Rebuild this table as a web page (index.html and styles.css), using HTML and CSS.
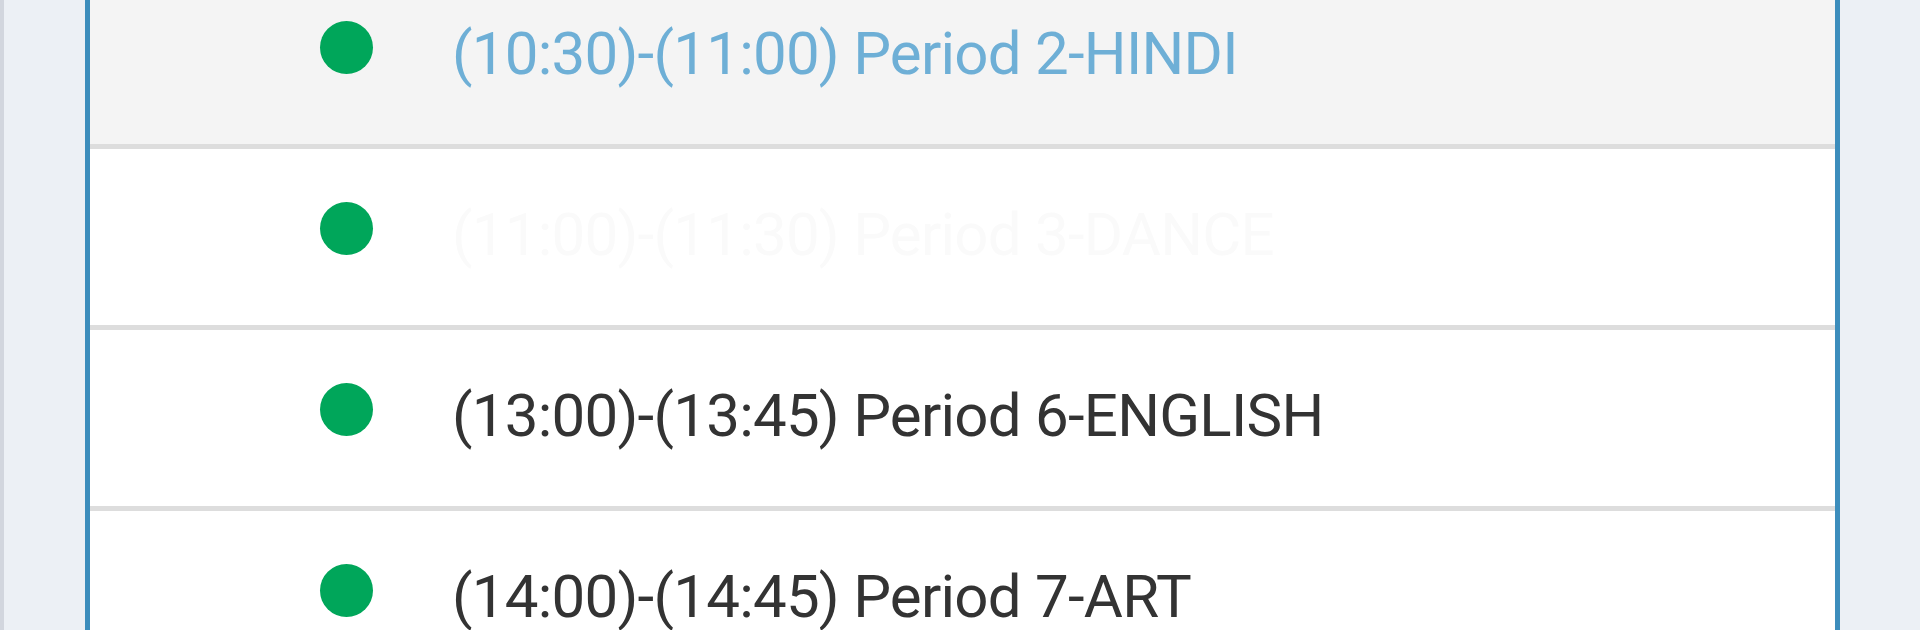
FILE: index.html
```html
<!DOCTYPE html>
<html lang="en">
<head>
<meta charset="utf-8">
<title>Timetable</title>
<link rel="stylesheet" href="styles.css">
</head>
<body>
<div class="page">
  <div class="edge"></div>
  <main class="content">
    <section class="box">
      <ul class="periods">
        <li class="period active"><span class="dot"></span><span class="label">(10:30)-(11:00) Period 2-HINDI</span></li>
        <li class="period ghost"><span class="dot"></span><span class="label">(11:00)-(11:30) Period 3-DANCE</span></li>
        <li class="period"><span class="dot"></span><span class="label">(13:00)-(13:45) Period 6-ENGLISH</span></li>
        <li class="period"><span class="dot"></span><span class="label">(14:00)-(14:45) Period 7-ART</span></li>
      </ul>
    </section>
  </main>
</div>
</body>
</html>
```
FILE: styles.css
```css
html, body {
  margin: 0;
  padding: 0;
  height: 630px;
  overflow: hidden;
  background: #ecf0f5;
  font-family: Roboto, "Liberation Sans", sans-serif;
}

.page {
  display: flex;
  height: 630px;
}

.edge {
  width: 4px;
  flex: none;
  background: #d2d6de;
}

.content {
  flex: 1;
  padding: 0 80px 0 81px;
  background: #ecf0f5;
  overflow: hidden;
}

.box {
  background: #fff;
  border-left: 5px solid #3c8dbc;
  border-right: 5px solid #3c8dbc;
  height: 100%;
  overflow: hidden;
}

.periods {
  list-style: none;
  margin: -32px 0 0;
  padding: 0;
}

.period {
  display: flex;
  align-items: flex-start;
  height: 176px;
  box-sizing: content-box;
  border-bottom: 5px solid #dddddd;
  padding: 0;
  background: #fff;
}

.period.active {
  background: #f4f4f4;
}

.dot {
  flex: none;
  width: 53px;
  height: 53px;
  border-radius: 50%;
  background: #00a65a;
  margin: 53px 0 0 230px;
}

.label {
  margin: 51px 0 0 79px;
  font-size: 60px;
  line-height: 70px;
  letter-spacing: -0.75px;
  color: #333333;
  white-space: nowrap;
}

.period.active .label {
  color: #6eafd6;
}

.period.ghost .label {
  color: #fafafa;
}
```
